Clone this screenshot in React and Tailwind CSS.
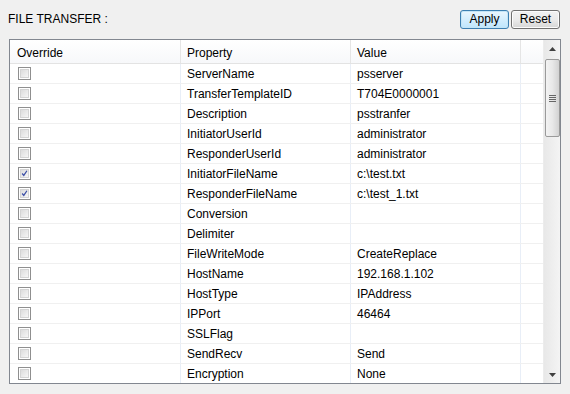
import React from "react";

const rows = [
  ["ServerName", "psserver", false],
  ["TransferTemplateID", "T704E0000001", false],
  ["Description", "psstranfer", false],
  ["InitiatorUserId", "administrator", false],
  ["ResponderUserId", "administrator", false],
  ["InitiatorFileName", "c:\\test.txt", true],
  ["ResponderFileName", "c:\\test_1.txt", true],
  ["Conversion", "", false],
  ["Delimiter", "", false],
  ["FileWriteMode", "CreateReplace", false],
  ["HostName", "192.168.1.102", false],
  ["HostType", "IPAddress", false],
  ["IPPort", "46464", false],
  ["SSLFlag", "", false],
  ["SendRecv", "Send", false],
  ["Encryption", "None", false],
];

function Checkbox({ checked }) {
  return (
    <div className="w-[13px] h-[13px] border border-[#8f8f8f] bg-white p-[1px]">
      <div className="w-full h-full border border-[#d4d4d4] bg-gradient-to-br from-[#dcdcdc] to-[#f6f6f6] relative">
        {checked && (
          <svg viewBox="0 0 9 9" className="absolute inset-0 w-full h-full">
            <path d="M1.5 4.5 L3.6 7 L7.6 1" fill="none" stroke="#3c4fa6" strokeWidth="1.6" />
          </svg>
        )}
      </div>
    </div>
  );
}

export default function App() {
  return (
    <div
      className="w-[570px] h-[394px] bg-[#f0f0f0] text-[12px] text-black overflow-hidden"
      style={{ fontFamily: '"Liberation Sans", Arial, sans-serif' }}
    >
      {/* top bar */}
      <div className="h-[39px] flex items-start justify-between pl-[8px] pr-[10px]">
        <div className="mt-[12px] leading-[14px]">FILE TRANSFER :</div>
        <div className="flex gap-[2px] mt-[10px]">
          <button className="w-[49px] h-[19px] leading-[15px] rounded-[3px] border border-[#3c7fb1] bg-gradient-to-b from-[#eaf6fd] to-[#bee6fd] shadow-[inset_0_0_0_1px_#c4e5f6]">
            Apply
          </button>
          <button className="w-[49px] h-[19px] leading-[15px] rounded-[3px] border border-[#707070] bg-gradient-to-b from-[#f2f2f2] via-[#ebebeb] to-[#d6d6d6] shadow-[inset_0_0_0_1px_#fcfcfc]">
            Reset
          </button>
        </div>
      </div>

      {/* grid */}
      <div className="ml-[9px] w-[552px] h-[345px] border border-[#828790] bg-white flex overflow-hidden">
        <div className="w-[533px] flex flex-col">
          <div className="h-[24px] flex border-b border-[#e3e3e3] bg-gradient-to-b from-white to-[#f7f8fa] shrink-0">
            <div className="w-[171px] border-r border-[#e5e5e5] pl-[7px] pt-[3px] leading-[20px]">Override</div>
            <div className="w-[170px] border-r border-[#e5e5e5] pl-[6px] pt-[3px] leading-[20px]">Property</div>
            <div className="w-[170px] border-r border-[#e5e5e5] pl-[6px] pt-[3px] leading-[20px]">Value</div>
            <div className="flex-1" />
          </div>
          {rows.map(([prop, val, checked]) => (
            <div key={prop} className="h-[20px] flex border-b border-[#f0f0f0] shrink-0">
              <div className="w-[171px] border-r border-[#e8eef7] pl-[8px] flex items-center">
                <Checkbox checked={checked} />
              </div>
              <div className="w-[170px] border-r border-[#e8eef7] pl-[6px] pt-[2px] leading-[17px]">{prop}</div>
              <div className="w-[170px] border-r border-[#e8eef7] pl-[6px] pt-[2px] leading-[17px]">{val}</div>
              <div className="flex-1" />
            </div>
          ))}
        </div>

        {/* scrollbar */}
        <div className="w-[17px] bg-gradient-to-r from-[#e8e8e8] to-[#f4f4f4] flex flex-col items-center border-l border-[#ececec]">
          <div className="h-[17px] w-full flex items-center justify-center">
            <svg width="7" height="4" viewBox="0 0 7 4">
              <path d="M0 4 L3.5 0 L7 4 Z" fill="#404040" />
            </svg>
          </div>
          <div className="mt-[2px] w-[15px] h-[78px] rounded-[2px] border border-[#9a9a9a] bg-gradient-to-r from-[#f3f3f3] via-[#e8e8e8] to-[#d2d2d2] flex items-center justify-center">
            <div className="flex flex-col gap-[1px]">
              <div className="w-[7px] h-[1px] bg-[#666]" />
              <div className="w-[7px] h-[1px] bg-[#666]" />
              <div className="w-[7px] h-[1px] bg-[#666]" />
              <div className="w-[7px] h-[1px] bg-[#666]" />
            </div>
          </div>
          <div className="flex-1" />
          <div className="h-[17px] w-full flex items-center justify-center">
            <svg width="7" height="4" viewBox="0 0 7 4">
              <path d="M0 0 L3.5 4 L7 0 Z" fill="#404040" />
            </svg>
          </div>
        </div>
      </div>
    </div>
  );
}
